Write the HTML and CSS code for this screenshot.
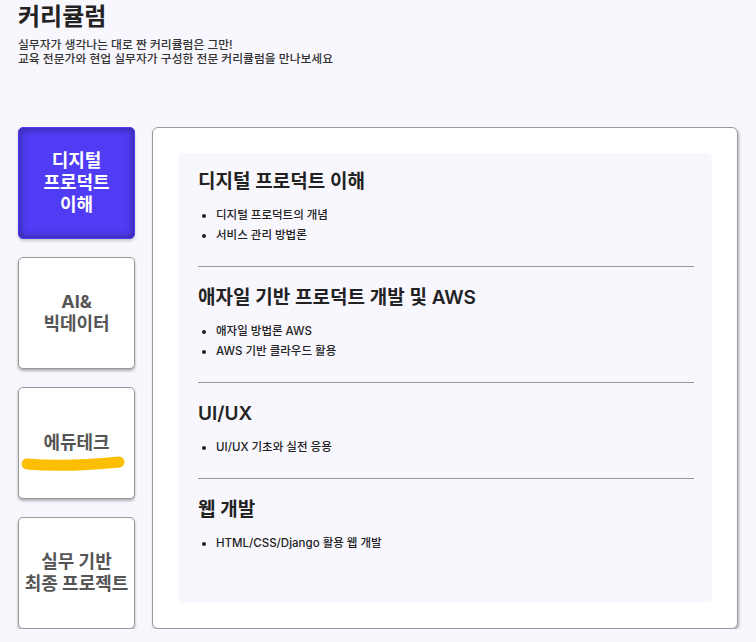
FILE: index.html
```html
<!DOCTYPE html>
<html lang="ko">
<head>
    <meta charset="UTF-8">
    <meta name="viewport" content="width=device-width, initial-scale=1.0">
    <title>커리큘럼</title>
    <link rel="stylesheet" href="styles.css">
</head>
<body>
    <div class="page">
        <div class="page-header">
            <h1>커리큘럼</h1>
            <p>실무자가 생각나는 대로 짠 커리큘럼은 그만!<br>교육 전문가와 현업 실무자가 구성한 전문 커리큘럼을 만나보세요</p>
        </div>

        <div class="curriculum">
            <div class="tabs">
                <div class="tab active">디지털<br>프로덕트<br>이해</div>
                <div class="tab">AI&amp;<br>빅데이터</div>
                <div class="tab marked">
                    에듀테크
                    <svg class="marker" width="110" height="18" viewBox="0 0 110 18">
                        <path d="M8 10 C 30 12, 60 12, 100 8" fill="none" stroke="#fcbf00" stroke-width="11" stroke-linecap="round"/>
                    </svg>
                </div>
                <div class="tab">실무 기반<br>최종 프로젝트</div>
            </div>

            <div class="panel">
                <div class="panel-inner">
                    <div class="section">
                        <h2>디지털 프로덕트 이해</h2>
                        <ul>
                            <li>디지털 프로덕트의 개념</li>
                            <li>서비스 관리 방법론</li>
                        </ul>
                    </div>
                    <div class="section">
                        <h2>애자일 기반 프로덕트 개발 및 AWS</h2>
                        <ul>
                            <li>애자일 방법론 AWS</li>
                            <li>AWS 기반 클라우드 활용</li>
                        </ul>
                    </div>
                    <div class="section">
                        <h2>UI/UX</h2>
                        <ul>
                            <li>UI/UX 기초와 실전 응용</li>
                        </ul>
                    </div>
                    <div class="section">
                        <h2>웹 개발</h2>
                        <ul>
                            <li>HTML/CSS/Django 활용 웹 개발</li>
                        </ul>
                    </div>
                </div>
            </div>
        </div>
    </div>
</body>
</html>
```

FILE: styles.css
```css
* {
    margin: 0;
    padding: 0;
    box-sizing: border-box;
}

body {
    font-family: Inter, 'Noto Sans CJK KR', sans-serif;
    background-color: #f9f7fe;
    color: #222;
}

.page {
    padding: 0 18px;
}

.page-header h1 {
    font-size: 24px;
    font-weight: 700;
    line-height: 34px;
    color: #222;
}

.page-header p {
    font-size: 11.8px;
    font-weight: 500;
    line-height: 14px;
    color: #333;
    margin-top: 4px;
}

.curriculum {
    display: flex;
    gap: 17px;
    margin-top: 61px;
    width: 720px;
}

.tabs {
    display: flex;
    flex-direction: column;
    gap: 18px;
    width: 117px;
    flex-shrink: 0;
}

.tab {
    position: relative;
    height: 112px;
    display: flex;
    flex-direction: column;
    justify-content: center;
    align-items: center;
    text-align: center;
    background: white;
    border: 1px solid #999;
    border-radius: 5px;
    box-shadow: 0 2px 3px rgba(0, 0, 0, 0.3);
    font-size: 18px;
    font-weight: 700;
    line-height: 22px;
    color: #555;
}

.tab.active {
    background: #4f3cf4;
    border-color: #4f3cf4;
    color: white;
    box-shadow: inset 0 0 8px rgba(0, 0, 0, 0.45), 0 2px 3px rgba(0, 0, 0, 0.2);
}

.marker {
    position: absolute;
    left: 0;
    top: 66px;
}

.panel {
    flex: 1;
    display: flex;
    flex-direction: column;
    background: white;
    border: 1px solid #999;
    border-radius: 6px;
    box-shadow: 1px 2px 3px rgba(0, 0, 0, 0.3);
    padding: 25px;
}

.panel-inner {
    flex: 1;
    background: #f9f7fe;
    border-radius: 5px;
    padding: 0 18px 0 20px;
}

.section {
    padding: 17px 0 21px;
    border-top: 1px solid #999;
}

.section:first-child {
    border-top: none;
    padding-top: 15px;
}

.section h2 {
    font-size: 19px;
    font-weight: 600;
    line-height: 28px;
    color: #222;
}

.section ul {
    margin-top: 9px;
    padding-left: 18px;
}

.section li {
    font-size: 11.5px;
    font-weight: 500;
    line-height: 20px;
    color: #222;
}
```
